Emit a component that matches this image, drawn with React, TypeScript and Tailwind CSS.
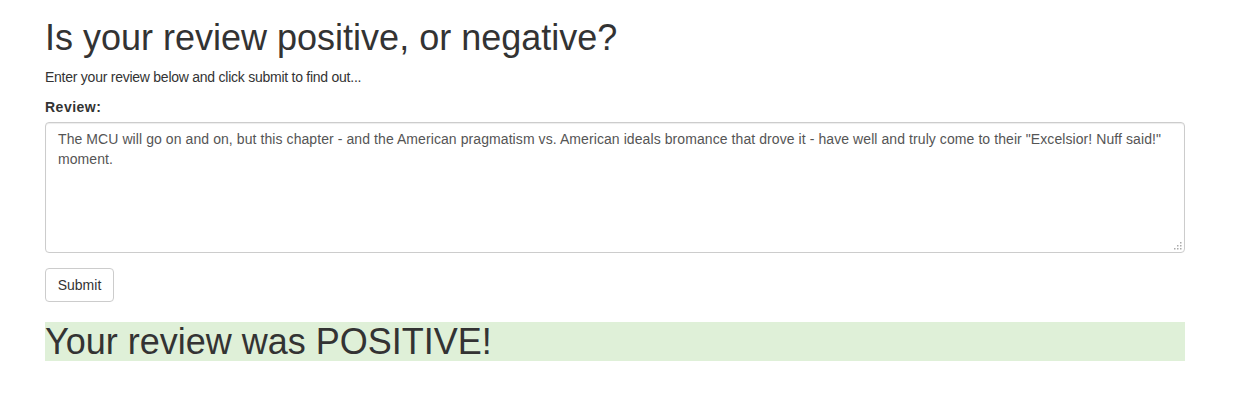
import React from "react";

export default function App() {
  const review =
    'The MCU will go on and on, but this chapter - and the American pragmatism vs. American ideals bromance that drove it - have well and truly come to their "Excelsior! Nuff said!" moment.';
  return (
    <div className="min-h-[401px] bg-white text-[#333] font-['Liberation_Sans',Arial,sans-serif] text-[14px] leading-[20px]">
      <div className="ml-[45px] w-[1140px] pb-[20px]">
        <h1 className="pt-[19px] mb-[10px] text-[36px] leading-[38px] font-normal">
          Is your review positive, or negative?
        </h1>
        <p className="mb-[10px] tracking-[-0.25px]">Enter your review below and click submit to find out...</p>
        <form onSubmit={(e) => e.preventDefault()}>
          <div className="mb-[15px]">
            <label className="block mb-[5px] font-bold tracking-[0.5px]">Review:</label>
            <div className="relative">
              <textarea
                className="block w-full h-[131px] px-[12px] py-[6px] border border-[#ccc] rounded-[4px] text-[#555] text-[14px] leading-[20px] tracking-[0.08px] shadow-[inset_0_1px_1px_rgba(0,0,0,0.075)] outline-none resize-none font-['Liberation_Sans',Arial,sans-serif]"
                defaultValue={review}
              />
              <svg
                className="absolute right-[3px] bottom-[3px] pointer-events-none"
                width="8"
                height="8"
                viewBox="0 0 8 8"
              >
                <rect x="6" y="0" width="1.5" height="1.5" fill="#aaa" />
                <rect x="3" y="3" width="1.5" height="1.5" fill="#aaa" />
                <rect x="6" y="3" width="1.5" height="1.5" fill="#aaa" />
                <rect x="0" y="6" width="1.5" height="1.5" fill="#aaa" />
                <rect x="3" y="6" width="1.5" height="1.5" fill="#aaa" />
                <rect x="6" y="6" width="1.5" height="1.5" fill="#aaa" />
              </svg>
            </div>
          </div>
          <button
            type="submit"
            className="h-[34px] w-[69px] border border-[#ccc] rounded-[4px] bg-white text-[#333] text-[14px] leading-[20px]"
          >
            Submit
          </button>
        </form>
        <h1 className="mt-[20px] h-[39px] bg-[#dff0d8] text-[36px] leading-[39px] font-normal">
          Your review was POSITIVE!
        </h1>
      </div>
    </div>
  );
}
